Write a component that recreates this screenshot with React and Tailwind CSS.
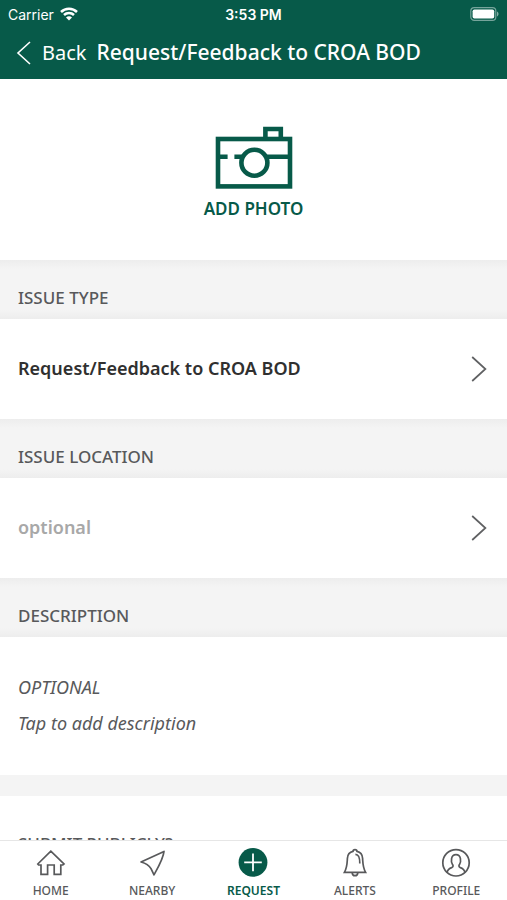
import React from 'react';

const WifiIcon = () => (
    <svg width="18" height="14" viewBox="0 0 18 14" fill="none" stroke="white" strokeWidth="2.5" aria-hidden="true">
        <path d="M1 5 C5.4 0.6 12.6 0.6 17 5" />
        <path d="M4 8 C6.8 5.2 11.2 5.2 14 8" />
        <path d="M9 13.4 L6 10.4 C7.6 9 10.4 9 12 10.4 Z" fill="white" stroke="none" />
    </svg>
);

const BatteryIcon = () => (
    <svg width="31" height="14" viewBox="0 0 31 14" aria-hidden="true">
        <rect x="2.8" y="0.7" width="25" height="12.6" rx="3.4" fill="none" stroke="white" strokeOpacity="0.45" strokeWidth="1.2" />
        <rect x="4.6" y="2.4" width="21.6" height="9.2" rx="1.8" fill="white" />
        <path d="M29 4.6 C31 5.4 31 8.6 29 9.4 Z" fill="white" fillOpacity="0.5" />
    </svg>
);

const CameraIcon = () => (
    <svg width="78" height="64" viewBox="0 0 78 64" fill="none" stroke="currentColor" strokeWidth="4.6" aria-hidden="true">
        <rect x="3" y="14" width="72" height="47.4" />
        <path d="M50.4 14 V4 H65.8 V14" />
        <path d="M3 31.8 H12.6 M19.4 31.8 H27 M52 31.8 H75" />
        <circle cx="39.4" cy="37.8" r="13" />
    </svg>
);

const Chevron = () => (
    <svg width="16" height="26" viewBox="0 0 16 26" fill="none" stroke="#5f6062" strokeWidth="1.7" aria-hidden="true">
        <path d="M1.2 1 L14.4 13 L1.2 25" />
    </svg>
);

const HomeIcon = () => (
    <svg width="30" height="30" viewBox="0 0 30 30" fill="none" stroke="currentColor" strokeWidth="1.7" aria-hidden="true">
        <path d="M14.8 3.2 L28 16 L26.8 17 H24.8 V26.4 H18.2 V17 H11.6 V26.4 H5 V17 H2.6 L1.8 16 Z" />
    </svg>
);

const NearbyIcon = () => (
    <svg width="30" height="30" viewBox="0 0 30 30" fill="none" stroke="currentColor" strokeWidth="1.7" strokeLinejoin="round" aria-hidden="true">
        <path d="M27 3.4 L4 14 C9 15.4 12 17.2 14 20.6 L17 26.8 C21 19.6 26.2 11 27 3.4 Z" />
    </svg>
);

const RequestIcon = () => (
    <svg width="30" height="30" viewBox="0 0 30 30" aria-hidden="true">
        <circle cx="15" cy="14.4" r="14.4" fill="currentColor" />
        <path d="M15 5.6 V23.2 M6.2 14.4 H23.8" stroke="white" strokeWidth="1.8" />
    </svg>
);

const AlertsIcon = () => (
    <svg width="30" height="30" viewBox="0 0 30 30" fill="none" stroke="currentColor" strokeWidth="1.7" aria-hidden="true">
        <path d="M13 3.4 C13 1 17 1 17 3.4 C20.8 4.2 22.4 7 22.6 10.4 C23 17 22.8 19.4 25.6 24.4 H4.4 C7.2 19.4 7 17 7.4 10.4 C7.6 7 9.2 4.2 13 3.4 Z" />
        <path d="M12.2 24.4 C12.2 28.8 17.8 28.8 17.8 24.4" />
        <path d="M15.4 6.4 C18.8 6.6 19.8 9 19.8 15.4" />
    </svg>
);

const ProfileIcon = () => (
    <svg width="30" height="30" viewBox="0 0 30 30" fill="none" stroke="currentColor" strokeWidth="1.7" aria-hidden="true">
        <circle cx="15" cy="14.8" r="13.2" />
        <path d="M6 24.6 C6.4 21.4 8.2 20.6 10.6 19.6 C12.4 18.8 12.4 17.6 11.4 16.2 C10 14 9.4 6.6 15 6.6 C20.6 6.6 20 14 18.6 16.2 C17.6 17.6 17.6 18.8 19.4 19.6 C21.8 20.6 23.6 21.4 24 24.6" />
    </svg>
);

const tabs = [
    { label: 'HOME', Icon: HomeIcon },
    { label: 'NEARBY', Icon: NearbyIcon },
    { label: 'REQUEST', Icon: RequestIcon, active: true },
    { label: 'ALERTS', Icon: AlertsIcon },
    { label: 'PROFILE', Icon: ProfileIcon },
];

const SectionTitle = ({ children, ...props }) => (
    <h2
        {...props}
        className="bg-[linear-gradient(#ededed,#f4f4f4_9px,#f4f4f4_50px,#ededed)] px-[18px] pt-[26px] pb-[9px] text-[17px] leading-6 font-medium text-[#58595b]">
        {children}
    </h2>
);

const PickerRow = ({ labelledBy, children }) => (
    <button
        aria-describedby={labelledBy}
        className="flex h-[100px] w-full items-center justify-between bg-white pr-5 pl-[18px] text-left">
        {children}
        <Chevron />
    </button>
);

const App = () => {
    return (
        <div className="flex h-screen flex-col bg-white font-['Noto_Sans',sans-serif]">
            <header className="bg-[#075a49] text-white">
                <div className="grid h-7 grid-cols-3 items-center px-2 font-['Inter',sans-serif] text-[14px]">
                    <span className="flex items-center gap-1.5">
                        Carrier <WifiIcon />
                    </span>
                    <span className="text-center font-semibold">3:53 PM</span>
                    <span className="justify-self-end">
                        <BatteryIcon />
                    </span>
                </div>
                <div className="flex h-[51px] items-center gap-[10px] px-4 pb-[2px]">
                    <button className="flex items-center gap-[11px] text-[20px]">
                        <svg width="15" height="24" viewBox="0 0 15 24" fill="none" stroke="white" strokeWidth="1.6" aria-hidden="true">
                            <path d="M14 1 L2 12 L14 23" />
                        </svg>
                        Back
                    </button>
                    <h1 className="text-[21px] font-medium">Request/Feedback to CROA BOD</h1>
                </div>
            </header>

            <main className="min-h-0 flex-1 overflow-y-auto [scrollbar-width:none]">
                <button className="flex h-[181px] w-full flex-col items-center justify-center gap-2 pt-[6px] text-[#075a49]">
                    <CameraIcon />
                    <span className="text-[17px] leading-6 font-semibold">ADD PHOTO</span>
                </button>

                <SectionTitle id="issue-type">ISSUE TYPE</SectionTitle>
                <PickerRow labelledBy="issue-type">
                    <span className="pb-[2px] text-[18px] font-semibold text-[#303030]">Request/Feedback to CROA BOD</span>
                </PickerRow>

                <SectionTitle id="issue-location">ISSUE LOCATION</SectionTitle>
                <PickerRow labelledBy="issue-location">
                    <span className="pb-[2px] text-[18px] font-semibold text-[#a8a8a8]">optional</span>
                </PickerRow>

                <SectionTitle>DESCRIPTION</SectionTitle>
                <div className="flex h-[138px] flex-col px-[18px] pt-8 text-[18px] leading-9 text-[#58595b] italic">
                    <label htmlFor="description">OPTIONAL</label>
                    <textarea
                        id="description"
                        rows={1}
                        placeholder="Tap to add description"
                        className="resize-none overflow-hidden bg-transparent outline-none placeholder:text-[#58595b]"
                    />
                </div>

                <div className="h-[21px] bg-[#f4f4f4]" />
                <h2 className="px-[18px] pt-9 pb-6 text-[17px] leading-6 font-medium text-[#58595b]">SUBMIT PUBLICLY?</h2>
            </main>

            <nav className="grid grid-cols-5 border-t border-[#e6e6e6] bg-white pt-[7px] pb-px">
                {tabs.map(({ label, Icon, active }) => (
                    <a
                        key={label}
                        href="#"
                        aria-current={active ? 'page' : undefined}
                        className={`flex flex-col items-center gap-[5px] text-[12px] leading-4 ${active ? 'font-semibold text-[#075a49]' : 'font-medium text-[#58595b]'}`}>
                        <Icon />
                        {label}
                    </a>
                ))}
            </nav>
        </div>
    );
};

export default App;
